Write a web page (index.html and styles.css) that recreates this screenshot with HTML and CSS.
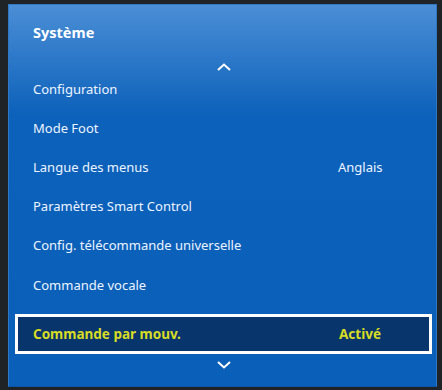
FILE: index.html
```html
<!DOCTYPE html>
<html lang="fr">
<head>
<meta charset="utf-8">
<title>Système</title>
<link rel="stylesheet" href="styles.css">
</head>
<body>
	<div class="panel">
		<h1 class="title">Système</h1>
		<div class="arrow up">
			<svg width="14" height="8" viewBox="0 0 14 8"><path d="M1 7 L7 1.5 L13 7" fill="none" stroke="#fff" stroke-width="2"/></svg>
		</div>
		<ul class="menu">
			<li><span class="label">Configuration</span><span class="value"></span></li>
			<li><span class="label">Mode Foot</span><span class="value"></span></li>
			<li><span class="label">Langue des menus</span><span class="value">Anglais</span></li>
			<li><span class="label">Paramètres Smart Control</span><span class="value"></span></li>
			<li><span class="label">Config. télécommande universelle</span><span class="value"></span></li>
			<li><span class="label">Commande vocale</span><span class="value"></span></li>
			<li class="sel"><span class="label">Commande par mouv.</span><span class="value">Activé</span></li>
		</ul>
		<div class="arrow down">
			<svg width="14" height="8" viewBox="0 0 14 8"><path d="M1 1 L7 6.5 L13 1" fill="none" stroke="#fff" stroke-width="2"/></svg>
		</div>
	</div>
</body>
</html>
```
FILE: styles.css
```css
*{ padding:0; margin:0; box-sizing:border-box; }
body{ background:#1f2326; font-family:"Noto Sans", "Open Sans", sans-serif; color:#eef4ff; }

.panel{ width:429px; height:383px; margin:4px 0 0 8px; background:linear-gradient(#4b8ed6, #0c61ba 110px, #0a5fb8); border:1px solid #2f78c6; border-bottom-color:#0a55a6; }
.title{ font-size:14.5px; font-weight:bold; line-height:20px; padding:17px 0 0 24px; color:#fff; }

.arrow{ display:flex; justify-content:center; height:8px; }
.arrow svg{ display:block; }
.up{ margin-top:21px; margin-left:2px; margin-bottom:-2px; }
.down{ margin-top:7px; margin-left:2px; }

.menu{ list-style:none; }
.menu li{ display:flex; align-items:center; height:39.2px; padding:0 31px 0 24px; font-size:13px; }
.menu .label{ flex:1; }
.menu .value{ width:67px; }

.menu .sel{ height:40px; margin:10px 4px 0 6px; padding:0 23px 0 15px; border:3px solid #fff; background:#07356c; color:#d8dc24; font-weight:bold; font-size:13.5px; }
```
